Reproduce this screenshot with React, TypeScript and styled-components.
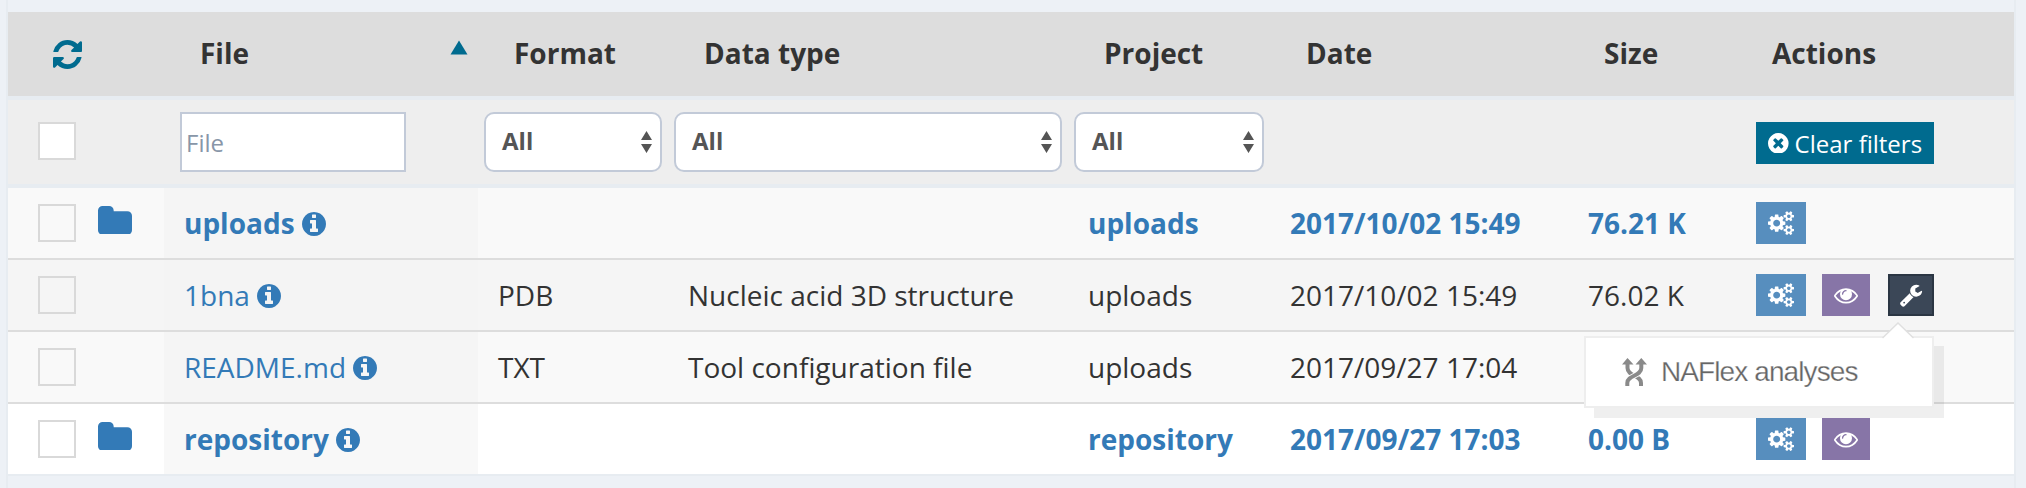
import React from "react";
import styled, { createGlobalStyle, css } from "styled-components";

const GlobalStyle = createGlobalStyle`
  * { box-sizing: border-box; }
  body {
    margin: 0;
    background: #edf1f6;
    font-family: "Open Sans", "Noto Sans", sans-serif;
    font-size: 28px;
    color: #333;
    overflow: hidden;
  }
`;

const Page = styled.div`
  height: 488px;
  padding: 0 10px 0 6px;
`;

const Panel = styled.div`
  height: 488px;
  padding-top: 12px;
  border: solid #e7ecf1;
  border-width: 0 2px;
`;

const Table = styled.div`
  border-bottom: 2px solid #e7ecf1;
`;

const columns = css`
  display: grid;
  grid-template-columns: 156px 314px 190px 400px 202px 298px 168px 278px;
`;

const HeaderRow = styled.div`
  ${columns}
  height: 84px;
  background: #ddd;
  font-weight: 700;
`;

const HeaderCell = styled.div`
  display: flex;
  align-items: center;
  justify-content: space-between;
  padding: 0 10px 2px 36px;
  white-space: nowrap;
`;

const RefreshCell = styled.div`
  display: flex;
  align-items: center;
  padding: 1px 0 0 45px;
  color: #006b8f;
`;

const SortMark = styled.svg`
  width: 18px;
  height: 15px;
  margin: -12px 0 0;
  fill: #006b8f;
`;

const FilterRow = styled.div`
  ${columns}
  height: 92px;
  background: #eee;
  border: solid #e7ecf1;
  border-width: 4px 0;
`;

const FilterCell = styled.div<{ $pad: number }>`
  display: flex;
  align-items: center;
  padding: 0 ${(p) => p.$pad}px;
`;

const Checkbox = styled.span<{ $filled?: boolean }>`
  flex: none;
  width: 38px;
  height: 38px;
  margin-top: ${(p) => (p.$filled ? "-2px" : "0")};
  border: 2px solid #d9d9d9;
  background: ${(p) => (p.$filled ? "#fff" : "transparent")};
`;

const CheckCell = styled.div`
  display: flex;
  align-items: center;
  padding-left: 30px;
`;

const FileInput = styled.input`
  width: 226px;
  height: 60px;
  padding: 0 4px;
  border: 2px solid #c2cad8;
  border-radius: 0;
  background: #fff;
  font: 24px "Open Sans", sans-serif;
  color: #555;
  outline: none;
  &::placeholder { color: #8896a8; opacity: 1; }
`;

const SelectBox = styled.div`
  display: flex;
  align-items: center;
  justify-content: space-between;
  width: 100%;
  height: 60px;
  padding: 0 8px 0 16px;
  border: 2px solid #c2cad8;
  border-radius: 10px;
  background: #fff;
  font-size: 24px;
  font-weight: 700;
  line-height: 33px;
  color: #555;
`;

const SelectValue = styled.span`
  padding-bottom: 3px;
`;

const SelectArrows = styled.svg`
  width: 11px;
  height: 22px;
  fill: #555;
`;

const ClearButton = styled.button`
  display: flex;
  align-items: center;
  gap: 6px;
  height: 42px;
  margin-top: 2px;
  padding: 0 12px;
  border: 0;
  background: #006b8f;
  color: #fff;
  font: 24px "Open Sans", sans-serif;
  white-space: nowrap;
`;

const Row = styled.div<{ $bg: string; $bold?: boolean; $first?: boolean }>`
  ${columns}
  height: ${(p) => (p.$first ? 70 : 72)}px;
  border-top: ${(p) => (p.$first ? "0" : "2px solid #ddd")};
  background: ${(p) => p.$bg};
  ${(p) => p.$bold && css`font-weight: 700; color: #337ab7;`}
`;

const Cell = styled.div`
  display: flex;
  align-items: center;
  padding: 0 0 0 20px;
  white-space: nowrap;
`;

const FileCell = styled(Cell)<{ $bg: string }>`
  gap: 7px;
  background: ${(p) => p.$bg};
  color: #337ab7;
`;

const InfoSlot = styled.span`
  display: flex;
  padding-top: 2px;
`;

const FolderSlot = styled.span`
  display: flex;
  margin: -6px 0 0 22px;
  color: #337ab7;
`;

const tones = {
  blue: { bg: "#578ebe", border: "#578ebe", width: 50 },
  purple: { bg: "#8775a7", border: "#8775a7", width: 48 },
  dark: { bg: "#3b4757", border: "#2b3643", width: 46 },
};

const ActionButton = styled.button<{ $tone: keyof typeof tones }>`
  display: flex;
  align-items: center;
  justify-content: center;
  width: ${(p) => tones[p.$tone].width}px;
  height: 42px;
  padding: 0;
  border: 2px solid ${(p) => tones[p.$tone].border};
  background: ${(p) => tones[p.$tone].bg};
  color: #fff;
`;

const ActionsCell = styled(Cell)`
  gap: 16px;
`;

const MenuAnchor = styled.div`
  position: relative;
  margin-left: 2px;
`;

const Menu = styled.div`
  position: absolute;
  z-index: 2;
  top: 62px;
  right: 0;
  display: flex;
  align-items: center;
  gap: 14px;
  width: 350px;
  height: 72px;
  padding-left: 36px;
  border: 2px solid #eee;
  background: #fff;
  box-shadow: 10px 10px rgba(102, 102, 102, 0.1);
`;

const MenuPointer = styled.svg`
  position: absolute;
  top: -16px;
  right: 18px;
  width: 32px;
  height: 17px;
`;

const MenuLabel = styled.span`
  font: 28px/40px "Liberation Sans", Arial, sans-serif;
  letter-spacing: -0.9px;
  color: #666;
  -webkit-text-stroke: 0.25px #fff;
`;

const Glyph = styled.svg`
  display: block;
  flex: none;
  fill: currentColor;
`;

const disc =
  "q0 209-103 385.500t-279.500 279.500-385.500 103-385.500-103-279.500-279.500-103-385.500 103-385.500 279.500-279.500 385.500-103 385.500 103 279.500 279.500 103 385.500z";
const smallGear =
  "v140q0 16-149 31-12 27-30 52 51 113 51 138 0 4-4 7-122 71-124 71-8 0-46-47t-52-68q-20 2-30 2t-30-2q-14 21-52 68t-46 47q-2 0-124-71-4-3-4-7 0-25 51-138-18-25-30-52-149-15-149-31v-140q0-16 149-31 13-29 30-52-51-113-51-138 0-4 4-7 4-2 35-20t59-34 30-16q8 0 46 46.500t52 67.500q20-2 30-2t30 2q51-71 92-112l6-2q4 0 124 70 4 3 4 7 0 25-51 138 17 23 30 52 149 15 149 31z";

const shapes = {
  refresh: {
    box: [128, 128, 1536, 1536],
    d: "M1639 1056q0 5-1 7-64 268-268 434.500t-478 166.500q-146 0-282.500-55t-243.500-157l-129 129q-19 19-45 19t-45-19-19-45v-448q0-26 19-45t45-19h448q26 0 45 19t19 45-19 45l-137 137q71 66 161 102t187 36q134 0 250-65t186-179q11-17 53-117 8-23 30-23h192q13 0 22.500 9.500t9.500 22.500zm25-800v448q0 26-19 45t-45 19h-448q-26 0-45-19t-19-45 19-45l138-138q-148-137-349-137-134 0-250 65t-186 179q-11 17-53 117-8 23-30 23h-199q-13 0-22.500-9.500t-9.500-22.500v-7q65-268 270-434.500t480-166.500q146 0 284 55.500t245 156.500l130-129q19-19 45-19t45 19 19 45z",
  },
  folder: {
    box: [64, 128, 1664, 1408],
    d: "M1728 608v704q0 92-66 158t-158 66h-1216q-92 0-158-66t-66-158v-960q0-92 66-158t158-66h320q92 0 158 66t66 158v32h672q92 0 158 66t66 158z",
  },
  info: {
    box: [128, 128, 1536, 1536],
    d:
      "M1152 1376v-160q0-14-9-23t-23-9h-96v-512q0-14-9-23t-23-9h-320q-14 0-23 9t-9 23v160q0 14 9 23t23 9h96v320h-96q-14 0-23 9t-9 23v160q0 14 9 23t23 9h448q14 0 23-9t9-23zm-128-896v-160q0-14-9-23t-23-9h-192q-14 0-23 9t-9 23v160q0 14 9 23t23 9h192q14 0 23-9t9-23zm640 416" +
      disc,
  },
  clear: {
    box: [128, 128, 1536, 1536],
    d:
      "M1277 1122q0-26-19-45l-181-181 181-181q19-19 19-45 0-27-19-46l-90-90q-19-19-46-19-26 0-45 19l-181 181-181-181q-19-19-45-19-27 0-46 19l-90 90q-19 19-19 46 0 26 19 45l181 181-181 181q-19 19-19 45 0 27 19 46l90 90q19 19 46 19 26 0 45-19l181-181 181 181q19 19 45 19 27 0 46-19l90-90q19-19 19-46zm387-226" +
      disc,
  },
  cogs: {
    box: [-64, 0, 1920, 1792],
    d:
      "M832 896q0-106-75-181t-181-75-181 75-75 181 75 181 181 75 181-75 75-181zm768 512q0-52-38-90t-90-38-90 38-38 90q0 53 37.500 90.500t90.500 37.500 90.500-37.500 37.500-90.500zm0-1024q0-52-38-90t-90-38-90 38-38 90q0 53 37.500 90.500t90.500 37.500 90.500-37.500 37.500-90.500zm-384 421v185q0 10-7 19.500t-16 10.500l-155 24q-11 35-32 76 34 48 90 115 7 11 7 20 0 12-7 19-23 30-82.500 89.500t-78.500 59.500q-11 0-21-7l-115-90q-37 19-77 31-11 108-23 155-7 24-30 24h-186q-11 0-20-7.500t-10-17.500l-23-153q-34-10-75-31l-118 89q-7 7-20 7-11 0-21-8-144-133-144-160 0-9 7-19 10-14 41-53t47-61q-23-44-35-82l-152-24q-10-1-17-9.500t-7-19.500v-185q0-10 7-19.500t16-10.500l155-24q11-35 32-76-34-48-90-115-7-11-7-20 0-12 7-20 22-30 82-89t79-59q11 0 21 7l115 90q34-18 77-32 11-108 23-154 7-24 30-24h186q11 0 20 7.500t10 17.500l23 153q34 10 75 31l118-89q8-7 20-7 11 0 21 8 144 133 144 160 0 9-7 19-12 16-42 54t-45 60q23 48 34 82l152 23q10 2 17 10.500t7 19.500zm640 533" +
      smallGear +
      "m0-1024" +
      smallGear,
  },
  eye: {
    box: [0, 0, 1792, 1792],
    d: "M1664 960q-152-236-381-353 61 104 61 225 0 185-131.500 316.500t-316.500 131.500-316.500-131.500-131.500-316.500q0-121 61-225-229 117-381 353 133 205 333.500 326.500t434.500 121.500 434.500-121.500 333.500-326.500zm-720-384q0-20-14-34t-34-14q-125 0-214.500 89.500t-89.500 214.500q0 20 14 34t34 14 34-14 14-34q0-86 61-147t147-61q20 0 34-14t14-34zm848 384q0 34-20 69-140 230-376.500 368.500t-499.500 138.500-499.500-139-376.500-368q-20-35-20-69t20-69q140-229 376.500-368t499.500-139 499.500 139 376.500 368q20 35 20 69z",
  },
  wrench: {
    box: [0, 0, 1792, 1792],
    d: "M448 1472q0-26-19-45t-45-19-45 19-19 45 19 45 45 19 45-19 19-45zm644-420l-682 682q-37 37-90 37-52 0-91-37l-106-108q-38-36-38-90 0-53 38-91l681-681q39 98 114.500 173.500t173.500 114.500zm634-435q0 39-23 106-47 134-164.500 217.500t-258.500 83.500q-185 0-316.500-131.500t-131.500-316.500 131.500-316.500 316.500-131.500q58 0 121.500 16.500t107.500 46.500q16 11 16 28t-16 28l-293 169v224l193 107q5-3 79-48.500t135.500-81 70.500-35.500q15 0 23.500 10t8.500 25z",
  },
};

function Icon({ name, width }: { name: keyof typeof shapes; width: number }) {
  const { box, d } = shapes[name];
  return (
    <Glyph viewBox={box.join(" ")} width={width} height={(width * box[3]) / box[2]}>
      <path d={d} />
    </Glyph>
  );
}

function HelixIcon() {
  return (
    <svg width="25" height="28" viewBox="0 0 25 28" fill="none" stroke="#8a8a8a" strokeWidth="4">
      <path d="M19 28v-3C19 17 5.500 18.500 5.500 10V5" />
      <path d="M5.300 28v-3C5.300 17 19.300 18.500 19.300 10V5" stroke="#fff" strokeWidth="5.500" />
      <path d="M5.300 28v-3C5.300 17 19.300 18.500 19.300 10V5" />
      <path d="M0 6.500 5.500 0 11.500 6.500zM13.500 6.500 19.300 0 25 6.500z" fill="#8a8a8a" stroke="none" />
    </svg>
  );
}

function Select() {
  return (
    <SelectBox>
      <SelectValue>All</SelectValue>
      <SelectArrows viewBox="0 0 11 22">
        <path d="M0 9 5.500 0 11 9zM0 13h11l-5.500 9z" />
      </SelectArrows>
    </SelectBox>
  );
}

type Action = "cogs" | "eye" | "wrench";

const actionTone: Record<Action, keyof typeof tones> = { cogs: "blue", eye: "purple", wrench: "dark" };

interface Entry {
  name: string;
  folder?: boolean;
  format?: string;
  type?: string;
  project: string;
  date: string;
  size: string;
  actions: Action[];
  bg: string;
  fileBg: string;
}

const entries: Entry[] = [
  { name: "uploads", folder: true, project: "uploads", date: "2017/10/02 15:49", size: "76.21 K", actions: ["cogs"], bg: "#f9f9f9", fileBg: "#f5f5f5" },
  { name: "1bna", format: "PDB", type: "Nucleic acid 3D structure", project: "uploads", date: "2017/10/02 15:49", size: "76.02 K", actions: ["cogs", "eye", "wrench"], bg: "#f5f5f5", fileBg: "#f4f4f4" },
  { name: "README.md", format: "TXT", type: "Tool configuration file", project: "uploads", date: "2017/09/27 17:04", size: "", actions: [], bg: "#f9f9f9", fileBg: "#f5f5f5" },
  { name: "repository", folder: true, project: "repository", date: "2017/09/27 17:03", size: "0.00 B", actions: ["cogs", "eye"], bg: "#fff", fileBg: "#f8f8f8" },
];

function ToolMenu() {
  return (
    <Menu>
      <MenuPointer viewBox="0 0 32 17">
        <path d="M1 16.500 16 1 31 16.500V17H1z" fill="#fff" />
        <path d="M.5 16 16 1l15.500 15" fill="none" stroke="#e0e0e0" strokeWidth="1.500" />
      </MenuPointer>
      <HelixIcon />
      <MenuLabel>NAFlex analyses</MenuLabel>
    </Menu>
  );
}

export default function App() {
  return (
    <Page>
      <GlobalStyle />
      <Panel>
        <Table>
          <HeaderRow>
            <RefreshCell>
              <Icon name="refresh" width={29} />
            </RefreshCell>
            <HeaderCell>
              File
              <SortMark viewBox="0 0 18 15">
                <path d="M.5 14.500 9 .5l8.500 14z" />
              </SortMark>
            </HeaderCell>
            {["Format", "Data type", "Project", "Date", "Size", "Actions"].map((title) => (
              <HeaderCell key={title}>{title}</HeaderCell>
            ))}
          </HeaderRow>
          <FilterRow>
            <CheckCell>
              <Checkbox $filled />
            </CheckCell>
            <FilterCell $pad={16}>
              <FileInput placeholder="File" />
            </FilterCell>
            <FilterCell $pad={6}>
              <Select />
            </FilterCell>
            <FilterCell $pad={6}>
              <Select />
            </FilterCell>
            <FilterCell $pad={6}>
              <Select />
            </FilterCell>
            <div />
            <div />
            <FilterCell $pad={20}>
              <ClearButton>
                <Icon name="clear" width={20.6} />
                Clear filters
              </ClearButton>
            </FilterCell>
          </FilterRow>
          {entries.map((entry, i) => (
            <Row key={entry.name} $bg={entry.bg} $bold={entry.folder} $first={i === 0}>
              <CheckCell>
                <Checkbox />
                {entry.folder && (
                  <FolderSlot>
                    <Icon name="folder" width={34} />
                  </FolderSlot>
                )}
              </CheckCell>
              <FileCell $bg={entry.fileBg}>
                {entry.name}
                <InfoSlot>
                  <Icon name="info" width={24} />
                </InfoSlot>
              </FileCell>
              <Cell>{entry.format}</Cell>
              <Cell>{entry.type}</Cell>
              <Cell>{entry.project}</Cell>
              <Cell>{entry.date}</Cell>
              <Cell>{entry.size}</Cell>
              <ActionsCell>
                {entry.actions.map((action) =>
                  action === "wrench" ? (
                    <MenuAnchor key={action}>
                      <ActionButton $tone="dark">
                        <Icon name="wrench" width={24} />
                      </ActionButton>
                      <ToolMenu />
                    </MenuAnchor>
                  ) : (
                    <ActionButton key={action} $tone={actionTone[action]}>
                      <Icon name={action} width={action === "cogs" ? 26 : 24} />
                    </ActionButton>
                  )
                )}
              </ActionsCell>
            </Row>
          ))}
        </Table>
      </Panel>
    </Page>
  );
}
